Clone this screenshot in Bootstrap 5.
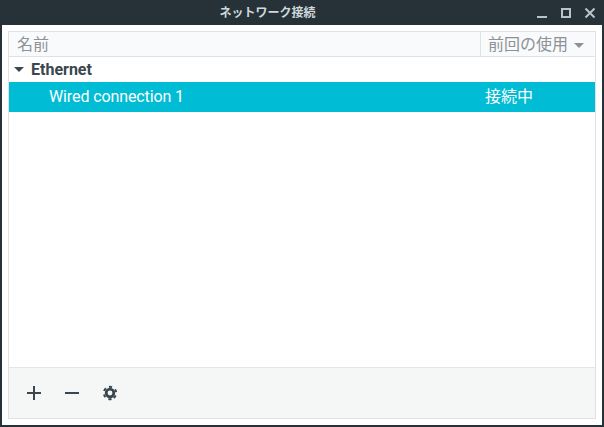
<!doctype html>
<html lang="ja"><head><meta charset="utf-8"><title>ネットワーク接続</title>
<link href="https://cdn.jsdelivr.net/npm/bootstrap@5.3.0/dist/css/bootstrap.min.css" rel="stylesheet">
<style>
html,body{height:427px;width:604px;overflow:hidden;background:#263238;margin:0}
body{font-family:Roboto,"Noto Sans CJK JP",sans-serif;font-size:16px;line-height:20px}
.win-frame{height:427px;padding:0 2px 2px;background:#263238}
.title-bar{height:25px;color:#cfd8dc;font-size:12px;font-weight:700;padding-top:7px}
.title-text{left:0;width:531px;top:4px;line-height:18px;text-align:center}
.win-btn{width:12px;height:12px;color:#b8c4ca;display:block}
.win-body{height:400px;padding:6px;background:#fff}
.inner-frame{height:388px;border:1px solid #dfe2e5}
.col-head{height:25px;background:#f9fafb;border-bottom:1px solid #dfe2e5;color:#8c9296;line-height:26px}
.head-name{padding-left:8px}
.head-used{width:115px;border-left:1px solid #dfe2e5;padding-left:7px;padding-top:2px}
.list-area{background:#fff}
.group-row{height:25px;color:#3b474e;font-weight:700;line-height:25px;padding-left:5px}
.conn-row{height:30px;background:#00bcd4;color:#fff;line-height:29px;padding-left:40px}
.conn-name{letter-spacing:-.11px}
.conn-state{width:110px}
.tool-bar{height:51px;background:#f5f7f7;border-top:1px solid #e3e6e8;padding-left:16px;gap:20px}
.tool-ico{width:18px;height:18px;color:#3b474e;display:block}
</style></head>
<body>
<div class="win-frame d-flex flex-column">
  <div class="title-bar position-relative d-flex justify-content-end align-items-start">
    <div class="title-text position-absolute">ネットワーク接続</div>
    <div class="d-flex position-relative" style="gap:12px;margin-right:6px">
      <svg class="win-btn" viewBox="0 0 12 12"><rect x="1" y="9" width="10" height="2" fill="currentColor"/></svg>
      <svg class="win-btn" viewBox="0 0 12 12"><rect x="2" y="2" width="8" height="8" fill="none" stroke="currentColor" stroke-width="2"/></svg>
      <svg class="win-btn" viewBox="0 0 12 12"><path d="M1.5 1.5 10.5 10.5M10.5 1.5 1.5 10.5" stroke="currentColor" stroke-width="2" fill="none"/></svg>
    </div>
  </div>
  <div class="win-body">
    <div class="inner-frame d-flex flex-column">
      <div class="col-head d-flex">
        <div class="head-name flex-grow-1">名前</div>
        <div class="head-used d-flex align-items-center" style="gap:6px"><span>前回の使用</span>
          <svg width="10" height="5" viewBox="0 0 10 5"><path d="M0 0h10L5 5z" fill="#8c9296"/></svg></div>
      </div>
      <div class="list-area flex-grow-1">
        <div class="group-row d-flex align-items-center" style="gap:7px">
          <svg width="10" height="5" viewBox="0 0 10 5"><path d="M0 0h10L5 5z" fill="#3b474e"/></svg><span>Ethernet</span>
        </div>
        <div class="conn-row d-flex justify-content-between">
          <span class="conn-name">Wired connection 1</span><span class="conn-state">接続中</span>
        </div>
      </div>
      <div class="tool-bar d-flex align-items-center">
        <svg class="tool-ico" viewBox="0 0 18 18"><path d="M9 2v14M2 9h14" stroke="currentColor" stroke-width="2" fill="none"/></svg>
        <svg class="tool-ico" viewBox="0 0 18 18"><path d="M2 9h14" stroke="currentColor" stroke-width="2" fill="none"/></svg>
        <svg class="tool-ico" viewBox="0 0 18 18" fill="none" stroke="currentColor"><circle cx="9" cy="9" r="3.8" stroke-width="2.8"/><circle cx="9" cy="9" r="6.2" stroke-width="2" stroke-dasharray="3.1 3.39" transform="rotate(76 9 9)"/></svg>
      </div>
    </div>
  </div>
</div>
<script src="https://cdn.jsdelivr.net/npm/bootstrap@5.3.0/dist/js/bootstrap.bundle.min.js"></script>
</body></html>
